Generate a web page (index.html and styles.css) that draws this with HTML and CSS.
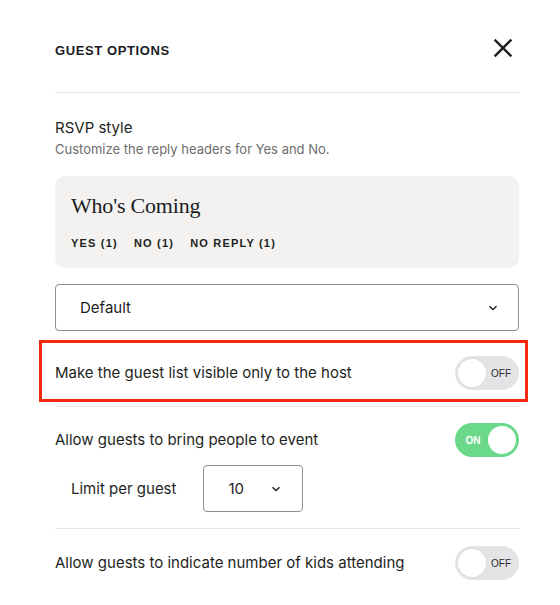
FILE: index.html
```html
<!DOCTYPE html>
<html>
<head>
<meta charset="utf-8">
<link rel="stylesheet" href="styles.css">
</head>
<body>
<div class="panel">
  <header class="header">
    <h1 class="title">Guest Options</h1>
    <button class="close" aria-label="Close">
      <svg width="18" height="18" viewBox="0 0 18 18"><path d="M1.5 1.5 L16.5 16.5 M16.5 1.5 L1.5 16.5" stroke="#1b1c1f" stroke-width="2.4" stroke-linecap="square" fill="none"/></svg>
    </button>
  </header>

  <section class="rsvp">
    <div class="label">RSVP style</div>
    <div class="sub">Customize the reply headers for Yes and No.</div>
    <div class="preview">
      <div class="preview-title">Who's Coming</div>
      <div class="preview-tabs"><span>Yes (1)</span><span>No (1)</span><span>No reply (1)</span></div>
    </div>
    <div class="select wide">
      <span>Default</span>
      <svg class="chev" width="10" height="6" viewBox="0 0 10 6"><path d="M1.5 1.2 L5 4.6 L8.5 1.2" stroke="#222" stroke-width="1.4" fill="none"/></svg>
    </div>
  </section>

  <div class="row highlighted">
    <span class="row-text">Make the guest list visible only to the host</span>
    <span class="toggle off"><span class="knob"></span><span class="tlabel">OFF</span></span>
  </div>

  <div class="group">
    <div class="row plain">
      <span class="row-text">Allow guests to bring people to event</span>
      <span class="toggle on"><span class="tlabel">ON</span><span class="knob"></span></span>
    </div>
    <div class="limit">
      <span class="row-text">Limit per guest</span>
      <div class="select small">
        <span>10</span>
        <svg class="chev" width="10" height="6" viewBox="0 0 10 6"><path d="M1.5 1.2 L5 4.6 L8.5 1.2" stroke="#222" stroke-width="1.4" fill="none"/></svg>
      </div>
    </div>
  </div>

  <div class="row last">
    <span class="row-text">Allow guests to indicate number of kids attending</span>
    <span class="toggle off"><span class="knob"></span><span class="tlabel">OFF</span></span>
  </div>
</div>
</body>
</html>
```

FILE: styles.css
```css
* { box-sizing: border-box; }
html, body { margin: 0; padding: 0; background: #fff; }
body {
  font-family: Inter, "Noto Sans", "Liberation Sans", sans-serif;
  color: #1e1f22;
}
.panel {
  width: 560px;
  padding: 0 41px 0 55px;
}
.header {
  height: 93px;
  padding-top: 8px;
  display: flex;
  align-items: center;
  justify-content: space-between;
  border-bottom: 1px solid #e6e6e6;
}
.title {
  margin: 0;
  font-family: "Liberation Sans", sans-serif;
  font-weight: 700;
  font-size: 13px;
  letter-spacing: 0.6px;
  text-transform: uppercase;
  color: #1b1c1f;
}
.close {
  border: 0;
  background: none;
  padding: 0;
  margin-right: 7px;
  margin-top: -4px;
  width: 18px;
  height: 18px;
  display: block;
}
.close svg { display: block; }

.rsvp { padding-top: 25px; }
.label { font-size: 15px; line-height: 20px; }
.sub { font-size: 13px; line-height: 18px; color: #6d6d6d; margin-top: 2px; }
.preview {
  margin-top: 18px;
  background: #f3f2f0;
  border-radius: 10px;
  padding: 16px 16px 18px;
  height: 92px;
}
.preview-title {
  font-family: "Liberation Serif", "DejaVu Serif", serif;
  font-size: 22px;
  line-height: 28px;
  letter-spacing: -0.2px;
  color: #1b1c1f;
}
.preview-tabs {
  margin-top: 16px;
  display: flex;
  gap: 16px;
  font-family: "Liberation Sans", sans-serif;
  font-weight: 700;
  font-size: 11px;
  line-height: 14px;
  letter-spacing: 1.2px;
  text-transform: uppercase;
}
.select {
  border: 1px solid #8d8d8d;
  border-radius: 4px;
  display: flex;
  align-items: center;
  justify-content: space-between;
  font-size: 15px;
  color: #1e1f22;
}
.select.wide {
  margin-top: 16px;
  height: 47px;
  padding: 0 20px 0 24px;
}
.select.small {
  width: 100px;
  height: 47px;
  padding: 0 21px 0 24px;
}
.chev { display: block; }

.row {
  display: flex;
  align-items: center;
  justify-content: space-between;
}
.row-text { font-size: 15px; line-height: 20px; }
.highlighted {
  position: relative;
  padding: 25px 0 16px;
  border-bottom: 1px solid #e6e6e6;
}
.highlighted::after {
  content: "";
  position: absolute;
  left: -16px;
  right: -9px;
  top: 9px;
  bottom: 4px;
  border: 3px solid #f2290f;
  pointer-events: none;
}
.group {
  padding: 16px 0 16px;
  border-bottom: 1px solid #e6e6e6;
}
.limit {
  margin-top: 8px;
  display: flex;
  align-items: center;
  gap: 27px;
  padding-left: 16px;
}
.last { padding-top: 17px; }

.toggle {
  width: 64px;
  height: 34px;
  border-radius: 17px;
  display: flex;
  align-items: center;
  padding: 0 3px;
  flex-shrink: 0;
}
.toggle .knob {
  width: 28px;
  height: 28px;
  border-radius: 50%;
  background: #fff;
  flex-shrink: 0;
}
.toggle .tlabel {
  flex: 1;
  text-align: center;
  font-family: "Liberation Sans", sans-serif;
  font-size: 10px;
}
.toggle.off { background: #e4e4e7; }
.toggle.off .knob { box-shadow: 0 0 0 1px #dcdcdf; }
.toggle.off .tlabel { color: #2a2a2a; }
.toggle.on { background: #6ad98a; }
.toggle.on .tlabel { color: #fff; font-weight: 700; }
```
